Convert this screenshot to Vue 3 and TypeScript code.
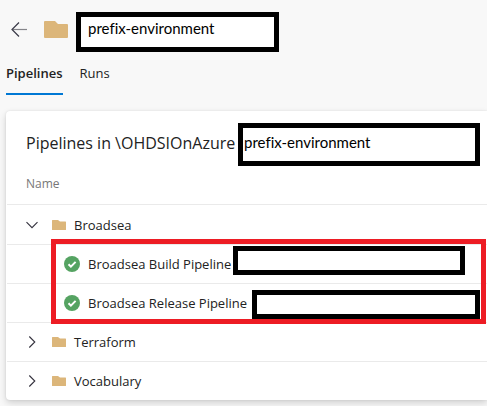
<script setup lang="ts">
import { ref } from 'vue'

interface Pipeline {
  name: string
  gap: 'tight' | 'wide'
}

interface Folder {
  name: string
  open: boolean
  pipelines: Pipeline[]
}

const environment = 'prefix-environment'
const tabs = ['Pipelines', 'Runs']
const activeTab = ref('Pipelines')

const folders = ref<Folder[]>([
  {
    name: 'Broadsea',
    open: true,
    pipelines: [
      { name: 'Broadsea Build Pipeline', gap: 'tight' },
      { name: 'Broadsea Release Pipeline', gap: 'wide' },
    ],
  },
  { name: 'Terraform', open: false, pipelines: [] },
  { name: 'Vocabulary', open: false, pipelines: [] },
])
</script>

<template>
  <main class="page">
    <header class="header">
      <button class="back" type="button" aria-label="Back">
        <svg width="16" height="16" viewBox="0 0 16 16">
          <path d="M2 8.5H16" fill="none" stroke="#85858a" stroke-width="1.2" />
          <path d="M8 1.5L1 8.5l7 7" fill="none" stroke="#3a3a48" stroke-width="1.2" />
        </svg>
      </button>
      <svg class="folder-large" width="24" height="18" viewBox="0 0 24 18">
        <path d="M1 0h10l3 3h9q1 0 1 1v12q0 1-1 1H1q-1 0-1-1V1q0-1 1-1z" fill="#dcb67a" />
      </svg>
      <div class="mask mask-header">{{ environment }}</div>
    </header>

    <nav class="tabs">
      <button
        v-for="tab in tabs"
        :key="tab"
        type="button"
        class="tab"
        :class="{ active: tab === activeTab }"
        @click="activeTab = tab"
      >
        {{ tab }}
      </button>
    </nav>

    <section class="card">
      <div class="title-row">
        <h1 class="title">Pipelines in \OHDSIOnAzure</h1>
        <div class="mask mask-title">{{ environment }}</div>
      </div>

      <table class="tree">
        <thead>
          <tr>
            <th scope="col">Name</th>
          </tr>
        </thead>
        <template v-for="folder in folders" :key="folder.name">
          <tbody>
            <tr>
              <td>
                <div class="row" :class="{ open: folder.open }">
                  <button
                    class="toggle"
                    type="button"
                    :aria-label="folder.name"
                    :aria-expanded="folder.open"
                    @click="folder.open = !folder.open"
                  >
                    <svg width="12" height="12" viewBox="0 0 12 12">
                      <path
                        :d="folder.open ? 'M0.5 3.2L6 8.7l5.5-5.5' : 'M3.3 0.5L8.8 6l-5.5 5.5'"
                        fill="none"
                        stroke="#33313d"
                        stroke-width="1.1"
                      />
                    </svg>
                  </button>
                  <svg class="folder-small" width="14" height="10" viewBox="0 0 14 10">
                    <path d="M0.5 0H6l2 1.6h5.5q.5 0 .5.5v7.4q0 .5-.5.5H.5Q0 10 0 9.5v-9Q0 0 .5 0z" fill="#dcb67a" />
                  </svg>
                  <span>{{ folder.name }}</span>
                </div>
              </td>
            </tr>
          </tbody>
          <tbody v-if="folder.open && folder.pipelines.length" class="highlighted">
            <tr v-for="pipeline in folder.pipelines" :key="pipeline.name">
              <td>
                <div class="row child">
                  <svg class="status" width="16" height="16" viewBox="0 0 16 16">
                    <circle cx="8" cy="8" r="8" fill="#55a362" />
                    <path d="M4.5 8.2l2.4 2.4 4.7-4.7" fill="none" stroke="#fff" stroke-width="2" />
                  </svg>
                  <span class="pipeline-name">{{ pipeline.name }}</span>
                  <span class="mask mask-row" :class="pipeline.gap"></span>
                </div>
              </td>
            </tr>
          </tbody>
        </template>
      </table>
    </section>
  </main>
</template>

<style>
body {
  background: #f8f8f8;
}
</style>

<style scoped>
.page {
  box-sizing: border-box;
  padding: 12px 0 6px 6px;
  overflow: hidden;
  font-family: "Open Sans", "Noto Sans", sans-serif;
  font-size: 13px;
  line-height: 20px;
  color: #222;
}

button {
  padding: 0;
  border: 0;
  background: none;
  font: inherit;
  color: inherit;
  cursor: pointer;
}

svg {
  display: block;
  flex: none;
}

.header {
  display: flex;
  align-items: flex-start;
}

.back {
  margin: 9px 17px 0 5px;
}

.folder-large {
  margin: 9px 8px 0 0;
}

.mask {
  box-sizing: border-box;
  border: 5px solid #000;
  background: #fff;
  font-family: Lato, "Open Sans", sans-serif;
  font-size: 15px;
  font-variant-ligatures: none;
  color: #000;
}

.mask-header {
  width: 203px;
  height: 40px;
  padding-left: 7px;
  line-height: 22px;
}

.tabs {
  display: flex;
  gap: 17px;
  height: 43px;
}

.tab {
  box-sizing: border-box;
  height: 43px;
  border-bottom: 2px solid transparent;
}

.tab.active {
  border-bottom-color: #0078d4;
  font-weight: 600;
}

.card {
  margin-top: 16px;
  padding: 12px 0 0 1px;
  border-radius: 4px 0 0 4px;
  background: #fff;
  box-shadow: 0 3px 7px rgba(0, 0, 0, 0.16), 0 0 2px rgba(0, 0, 0, 0.1);
}

.title-row {
  display: flex;
  padding: 0 7px 0 19px;
}

.title {
  flex: none;
  width: 212px;
  margin: 0;
  font-size: 16px;
  font-weight: 400;
  line-height: 40px;
  white-space: nowrap;
}

.mask-title {
  flex: 1;
  height: 43px;
  padding-left: 1px;
  line-height: 28px;
}

.tree {
  width: 100%;
  border-collapse: separate;
  border-spacing: 0;
}

th {
  height: 35px;
  padding: 0 0 3px 19px;
  font-size: 12px;
  font-weight: 400;
  text-align: left;
  color: #777;
}

td {
  padding: 0;
  border-top: 1px solid #eaeaea;
}

.row {
  display: flex;
  align-items: center;
  height: 38px;
  padding-left: 19px;
}

.row.open {
  height: 39px;
}

.toggle {
  margin-right: 14px;
}

.folder-small {
  margin-right: 8px;
}

.child {
  padding: 0 7px 0 57px;
}

.status {
  margin-right: 8px;
}

.pipeline-name {
  white-space: nowrap;
}

.mask-row {
  flex: 1;
  height: 29px;
}

.mask-row.tight {
  margin: 0 15px 8px 2px;
}

.mask-row.wide {
  margin: 2px 0 0 5px;
}

.highlighted {
  position: relative;
}

/* Call-out frame around the pipelines of an open folder */
.highlighted::after {
  content: "";
  position: absolute;
  inset: -5px 1px -2px 44px;
  border: 5px solid #ed1c24;
  pointer-events: none;
}
</style>
